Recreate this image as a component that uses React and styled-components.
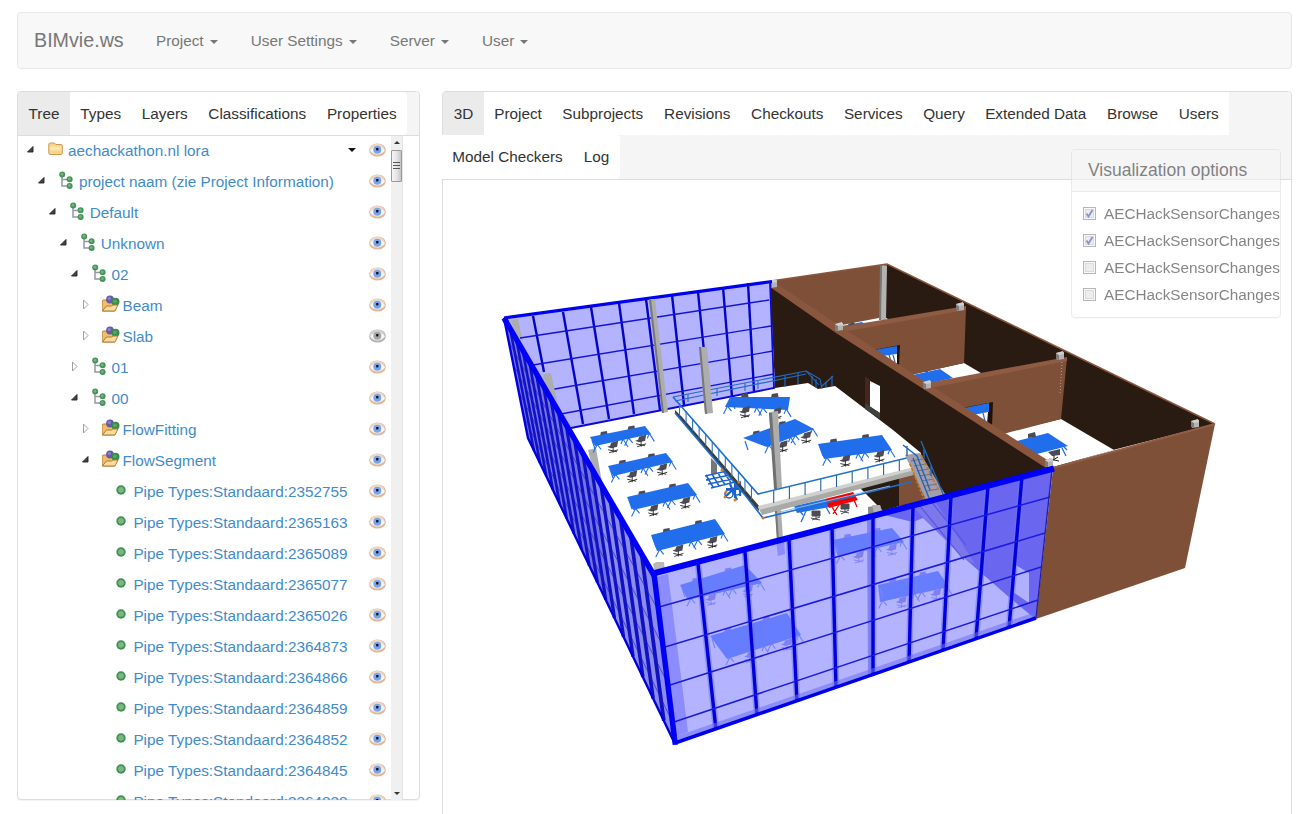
import React from "react";
import styled, { createGlobalStyle } from "styled-components";

const GlobalStyle = createGlobalStyle`
  *, *::before, *::after { box-sizing: border-box; }
  html, body { margin: 0; padding: 0; background: #fff; }
  body {
    height: 814px;
    overflow: hidden;
    font-family: "Liberation Sans", Arial, Helvetica, sans-serif;
    font-size: 15.3px;
    color: #333;
  }
`;

const Page = styled.div`
  height: 814px;
  overflow: hidden;
  padding: 12px 22px 0 17px;
`;

const Navbar = styled.nav`
  display: flex;
  align-items: center;
  height: 57px;
  padding-left: 16px;
  background: #f8f8f8;
  border: 1px solid #e7e7e7;
  border-radius: 4px;
  color: #777;
`;

const Brand = styled.a`
  font-size: 19.7px;
  margin-right: 32.3px;
  line-height: 22px;
  margin-top: -2px;
`;

const NavItem = styled.a`
  display: flex;
  align-items: center;
  margin-right: 33.2px;
  white-space: nowrap;
`;

const Caret = styled.span`
  width: 0;
  height: 0;
  margin-left: ${(p) => p.$gap ?? 6}px;
  margin-top: ${(p) => p.$drop ?? 2}px;
  border-left: 4px solid transparent;
  border-right: 4px solid transparent;
  border-top: 4px solid ${(p) => p.$color || "#777"};
`;

const Columns = styled.div`
  display: flex;
  align-items: flex-start;
  gap: 22px;
  margin-top: 22px;
`;

const Panel = styled.section`
  position: relative;
  flex: none;
  width: ${(p) => p.$w}px;
  height: ${(p) => p.$h}px;
  border: 1px solid #ddd;
  border-radius: 4px;
  background: #fff;
  box-shadow: 0 1px 1px rgba(0, 0, 0, 0.05);
`;

const TabBar = styled.div`
  display: flex;
  flex-wrap: wrap;
  background: #f5f5f5;
  border-bottom: 1px solid #ddd;
  border-radius: 3px 3px 0 0;
`;

const Tab = styled.a`
  display: flex;
  align-items: center;
  justify-content: center;
  height: ${(p) => p.$h || 43}px;
  width: ${(p) => p.$w}px;
  margin-left: ${(p) => (p.$wrapStart ? -1 : 0)}px;
  white-space: nowrap;
  background: ${(p) => (p.$active ? "#ebebeb" : "#fff")};
  border-radius: ${(p) => (p.$last ? "0 4px 4px 0" : p.$active ? "3px 0 0 0" : "0")};
`;

const TreeBody = styled.div`
  display: flex;
  height: 664px;
  width: 385px;
`;

const TreeList = styled.div`
  flex: 1;
  overflow: hidden;
`;

const Row = styled.div`
  display: flex;
  align-items: center;
  height: 31px;
  padding-left: ${(p) => 7 + p.$level * 10.9}px;
`;

const Toggle = styled.span`
  display: flex;
  width: 22px;
  height: 16px;
  margin-top: -3px;
`;

const IconBox = styled.span`
  display: flex;
  width: 18px;
  height: 20px;
  margin-right: 3px;
  margin-top: -5px;
`;

const Label = styled.a`
  flex: 1;
  color: #428bca;
  white-space: nowrap;
  margin-top: -2px;
`;

const EyeBox = styled.span`
  display: flex;
  width: 17px;
  height: 14px;
  margin: -4px 5px 0 13px;
`;

const Scrollbar = styled.div`
  display: flex;
  flex-direction: column;
  align-items: center;
  width: 12px;
  background: #f0f0f0;
  border-right: 1px solid #e4e4e4;
`;

const ScrollArrow = styled.span`
  width: 0;
  height: 0;
  margin: ${(p) => (p.$down ? "auto 0 5px" : "5px 0 6px")};
  border-left: 3px solid transparent;
  border-right: 3px solid transparent;
  ${(p) => (p.$down ? "border-top: 3px solid #333;" : "border-bottom: 3px solid #333;")}
`;

const Thumb = styled.span`
  display: flex;
  flex-direction: column;
  align-items: center;
  justify-content: center;
  gap: 1px;
  width: 11px;
  height: 32px;
  border: 1px solid #999;
  border-radius: 1px;
  background: linear-gradient(90deg, #f5f5f5, #e6e6e8 50%, #c6c6ca);
`;

const Grip = styled.i`
  width: 7px;
  height: 2px;
  border-top: 1px solid #555;
`;

const SceneSvg = styled.svg`
  display: block;
  width: 848px;
  height: 634px;
`;

const Options = styled.aside`
  position: absolute;
  left: 628px;
  top: 57px;
  width: 210px;
  height: 169px;
  overflow: hidden;
  opacity: 0.6;
  border: 1px solid #ddd;
  border-radius: 4px;
  background: #fff;
  box-shadow: 0 1px 1px rgba(0, 0, 0, 0.05);
`;

const OptionsTitle = styled.h3`
  margin: 0;
  height: 42px;
  padding-left: 16px;
  font-size: 17.5px;
  font-weight: 400;
  line-height: 40px;
  background: #f5f5f5;
  border-bottom: 1px solid #ddd;
`;

const OptionList = styled.div`
  display: flex;
  flex-direction: column;
  padding-top: 8px;
`;

const Option = styled.label`
  display: flex;
  align-items: center;
  gap: 8px;
  height: 27px;
  padding-left: 11px;
  white-space: nowrap;
`;

const CheckIcon = styled.svg`
  flex: none;
  width: 13px;
  height: 13px;
`;

const Check = ({ on }) => (
  <CheckIcon viewBox="0 0 13 13">
    <rect x=".5" y=".5" width="12" height="12" fill="#f6f6f6" stroke="#858585" />
    <rect x="2.5" y="2.5" width="8" height="8" fill="#e2e2e4" stroke="#bfc1c8" />
    {on && <path d="M3.5 6.5 L5.5 9.5 L9.5 3" fill="none" stroke="#3b52a0" strokeWidth="1.9" />}
  </CheckIcon>
);

const Eye = ({ gray }) => (
  <svg width="17" height="14" viewBox="0 0 17 14">
    <ellipse cx="8.5" cy="7" rx="8.4" ry="6.600" fill={gray ? "#b4b4b4" : "#e2b899"} />
    <ellipse cx="8.1" cy="6.200" rx="7.400" ry="5.500" fill={gray ? "#d2d2d2" : "#ecd8c8"} />
    <path d="M1.200 7.500Q8.500 -1.500 16 7.500Q8.500 15 1.200 7.500Z" fill="#f4f8fc" />
    <circle cx="8.300" cy="6.800" r="4" fill={gray ? "#a4a4a4" : "#7aa4ea"} />
    <rect x="7.200" y="5" width="2.200" height="2.400" fill="#0b0b16" />
  </svg>
);

const Arrow = ({ kind }) => (
  <svg width="16" height="16" viewBox="0 0 16 16">
    {kind === "open" && <path d="M2.5 10 L8 4.500 V10 Z" fill="#444" stroke="#222" strokeWidth=".9" />}
    {kind === "closed" && <path d="M3.500 3 L8 7.500 L3.500 12 Z" fill="#fff" stroke="#a0a0a0" />}
  </svg>
);

const NodeIcon = ({ kind }) => (
  <svg width="18" height="20" viewBox="0 0 18 20">
    {kind === "folder" && (
      <g transform="translate(.3 .5)">
        <path d="M1.500 13.500V5.500Q1.500 3.500 3 3.500H7L8.500 5H14Q15 5 15 6.500V13.500Q15 15 14 15H3Q1.500 15 1.500 13.500Z" fill="#f9d58c" stroke="#c9994f" />
        <path d="M2.500 7H14V11H2.500Z" fill="#fce8b4" opacity=".8" />
      </g>
    )}
    {kind === "tree" && (
      <g>
        <path d="M4 5V16H11M4 9.500H11" fill="none" stroke="#9298a5" strokeWidth="1.500" />
        <circle cx="4.200" cy="4.500" r="3" fill="#459358" />
        <circle cx="11.600" cy="9.300" r="3" fill="#459358" />
        <circle cx="11.600" cy="16" r="3" fill="#459358" />
        <circle cx="4" cy="4.200" r="1.400" fill="#74b47e" />
        <circle cx="11.300" cy="9" r="1.400" fill="#74b47e" />
        <circle cx="11.300" cy="15.700" r="1.400" fill="#74b47e" />
      </g>
    )}
    {kind === "group" && (
      <g transform="translate(-.5 .5)">
        <path d="M.5 16V6.500L2 5.500H6L7 7.500H15V9L13 16.500H1Z" fill="#f1bd6a" stroke="#b5813a" />
        <circle cx="8.500" cy="5" r="3.900" fill="#655aa6" />
        <circle cx="7.800" cy="4" r="1.700" fill="#8b82c2" />
        <circle cx="14" cy="7.300" r="4" fill="#3a8c4a" />
        <circle cx="13.500" cy="6.800" r="1.900" fill="#57a463" />
        <path d="M.800 16.500 L5 11.500H10L11.500 10.500H16.500L13.500 16.500Z" fill="#f9dc9e" stroke="#b07b30" />
      </g>
    )}
    {kind === "dot" && (
      <g>
        <circle cx="9" cy="10" r="4.700" fill="#3f9156" />
        <circle cx="9" cy="9.800" r="2.900" fill="#7db67e" />
      </g>
    )}
  </svg>
);

const P = ({ p, ...rest }) => <polygon points={p} {...rest} />;

const lerp = (a, b, t) => [a[0] + (b[0] - a[0]) * t, a[1] + (b[1] - a[1]) * t];

/* A desk is given by its four top corners: back left, back right, front right, front left. */
const Desk = ({ q, top = "#216eec", chair = "#4a4b55", leg = top }) => {
  const [a, b, c, d] = q;
  const foot = chair === "#4a4b55" ? "#222" : chair;
  return (
    <g>
      {[0.18, 0.68].map((t) => {
        const [x, y] = lerp(a, b, t);
        return <path key={t} d={`M${x} ${y + 2} l1 -5 l6 -1 l1 6z`} fill={chair} />;
      })}
      {[0.04, 0.5, 0.6, 0.97].map((t, i) => {
        const [x, y] = lerp(d, c, t);
        return (
          <path
            key={t}
            d={`M${x} ${y - 1} l${i % 2 ? 5 : -4} 8 M${x} ${y - 1} l${i % 2 ? -2 : 4} 5`}
            stroke={leg}
            strokeWidth="1.100"
            fill="none"
          />
        );
      })}
      <polygon points={q.map((v) => v.join(",")).join(" ")} fill={top} />
      <path d={`M${a[0] + 2} ${a[1] + 3} l3 9`} stroke={leg} strokeWidth="1.200" />
      {[0.27, 0.77].map((t) => {
        const [x, y] = lerp(d, c, t);
        return (
          <g key={t}>
            <path d={`M${x + 1} ${y} l7 -2 l-1 6 l-6 1.500 l-4 -1.500 l3 -1 z`} fill={chair} />
            <path
              d={`M${x + 3} ${y + 4} v6 M${x - 2} ${y + 7} l9 2 M${x + 8} ${y + 7} l-9 3`}
              stroke={foot}
              strokeWidth=".9"
            />
          </g>
        );
      })}
    </g>
  );
};

const BACK_POSTS = [
  [533, 316, 544, 372], [563, 312, 583, 424], [591, 307, 609, 419], [619, 303, 634, 414],
  [646, 299, 660, 410], [672, 295, 684, 405], [698, 292, 709, 401], [723, 287, 732, 397],
  [748, 283, 754, 391],
];
const BACK_RAILS = [
  [520, 338, 769, 300], [533, 365, 771, 326], [549, 390, 773, 351], [561, 414, 774, 374],
];
const FRONT_POSTS = [
  [698, 564, 716, 730], [745, 552, 757, 715], [789, 540, 797, 702], [832, 528, 836, 688],
  [873, 517, 873, 675], [913, 506, 909, 663], [951, 496, 943, 651], [988, 486, 976, 639],
  [1022, 476, 1009, 628],
];
const FRONT_RAILS = [
  [659, 607, 1050, 497], [665, 647, 1045, 533], [670, 685, 1041, 567], [674, 722, 1038, 600],
];
const BAYS = 18;
const SIDE_POSTS = Array.from({ length: BAYS - 1 }, (_, i) => {
  const t = (i + 1) / BAYS;
  const s = t / (1.4 * (1 - t) + t);
  return [...lerp([504, 318], [653, 574], s), ...lerp([528, 438], [675, 744], s), 2.4 + 1.5 * s];
});

const Lines = ({ list, ...rest }) => (
  <g {...rest}>
    {list.map((l, i) => (
      <line key={i} x1={l[0]} y1={l[1]} x2={l[2]} y2={l[3]} strokeWidth={l[4]} />
    ))}
  </g>
);

const CUBES = [[773, 284], [839, 327], [927, 385], [960, 307], [1060, 356], [1049, 463], [1195, 424]];

const rail = (x1, y1, x2, y2, n, h1, h2) =>
  Array.from({ length: n }, (_, i) => {
    const t = (i + 1) / (n + 1);
    const [x, y] = lerp([x1, y1], [x2, y2], t);
    return [x, y, x, y + h1 + (h2 - h1) * t];
  });

const GLASS = { top: "#667dff", chair: "#8080f5", leg: "#7585fa" };

const Scene = () => (
  <SceneSvg viewBox="443 180 848 634">
    {/* outer shell and rooms */}
    <P p="887,264 1215,424 1113,450 1053,468 845,335 882,300" fill="#2a1b12" />
    <P p="771,281 887,264 884,318 838,330" fill="#7e5038" />
    <P p="842,325 884,317 890,320 848,330" fill="#fff" />
    <P p="842,326 862,322 866,325 848,329" fill="#216eec" />
    <P p="848,324 854,322 855,325 849,326" fill="#4a4b55" />
    <P p="882,265 887,266 886,320 880,320" fill="#b2b2b2" />
    <P p="880,265 882,265 881,320 879,320" fill="#777" />
    <path d="M771 281 L887 264 L1215 424" fill="none" stroke="#8a573e" strokeWidth="1.600" />
    <P p="905,376 964,363 986,376 925,388" fill="#fff" />
    <P p="908,376 940,369 953,378 926,384" fill="#216eec" />
    <P p="920,369 927,368 928,372 920,372" fill="#4a4b55" />
    <path d="M938 383 l4 -1 M944 381 l5 -1" stroke="#6f7d95" strokeWidth="2" />
    <P p="838,328 966,308 964,363 906,376" fill="#7e5038" />
    <P p="840,327 966,306 966,310 842,332" fill="#8f5b42" />
    <P p="873,350 900,345 899,366" fill="#1c110b" />
    <P p="874,350 897,346 897,355 882,356" fill="#216eec" />
    <P p="882,356 897,354 897,364" fill="#fff" />
    <path d="M884 356 l4 4 M889 355 l2 6 M893 355 l2 7" stroke="#4a5a80" strokeWidth="1.200" />

    <P p="1003,433 1061,419 1114,450 1053,467" fill="#fff" />
    <P p="927,385 1067,358 1061,419 1003,434" fill="#7e5038" />
    <P p="1013,442 1048,433 1068,446 1033,455" fill="#216eec" />
    <path d="M1037 455 l4 6 M1062 448 l4 8 M1064 447 l3 3" stroke="#216eec" strokeWidth="1.300" />
    <P p="1048,452 1060,449 1060,455 1052,456" fill="#4a4b55" />
    <path d="M1054 455 v4 M1049 459 l10 2 M1058 457 l-8 5" stroke="#222" />
    <P p="1028,434 1035,432 1036,437 1028,438" fill="#4a4b55" />
    <P p="927,383 1067,357 1067,361 930,388" fill="#8f5b42" />
    <path d="M1062 362 L1060 395" stroke="#b0a09a" strokeDasharray="1 2" />
    <P p="962,408 993,402 992,426 985,425" fill="#1c110b" />
    <P p="964,408 989,403 989,412 971,415" fill="#216eec" />
    <P p="972,415 988,412 987,424" fill="#fff" />
    <path d="M976 415 l6 5 M983 413 l2 8" stroke="#216eec" strokeWidth="1.200" />
    <P p="1053,468 1215,424 1185,568 1036,619" fill="#7e5038" />
    <path d="M1053 468 L1215 424" stroke="#915d44" strokeWidth="2" />

    {/* corridor wall */}
    <P p="770,284 775,388 808,383 818,389 835,386 893,430 921,453 917,476 900,506 1053,470 840,331" fill="#2a1b12" />
    <P p="774,282 840,326 927,383 1052,463 1046,468 925,390 836,333 770,287" fill="#8a573e" />
    <P p="865,376 870,380 870,408 865,404" fill="#46271f" />
    <P p="870,381 880,386 880,413 870,407" fill="#fff" />
    <P p="865,403 880,413 880,419 865,409" fill="#3f413e" />
    {CUBES.map(([x, y]) => (
      <g key={x}>
        <P p={`${x - 4},${y - 3} ${x + 4},${y - 4} ${x + 4},${y + 3} ${x - 3},${y + 4}`} fill="#b4b4b4" />
        <P p={`${x - 4},${y - 3} ${x - 1},${y - 1} ${x - 1},${y + 4} ${x - 4},${y + 3}`} fill="#7c7c7c" />
        <P p={`${x - 4},${y - 3} ${x + 3},${y - 5} ${x + 4},${y - 2} ${x - 1},${y - 1}`} fill="#cfcfcf" />
      </g>
    ))}

    {/* back glass wall */}
    <P p="504,318 770,281 775,388 571,428" fill="#b3b3ff" />
    <P p="511,320 518,319 523,342 515,334" fill="#adadad" />
    <Lines list={BACK_POSTS} stroke="#0404c8" strokeWidth="2.400" />
    <Lines list={BACK_RAILS} stroke="#1212d8" strokeWidth="1.300" />
    <path d="M504 318 L772 281.500" stroke="#0000f0" strokeWidth="3.200" />
    <path d="M770 282 L774 388 L571 428" fill="none" stroke="#0a0ad2" strokeWidth="1.800" />
    <P p="649,299 655,299 668,412 662,413" fill="#adadad" />
    <P p="649,299 651,299 664,413 662,413" fill="#777" />
    <P p="543,374 551,373 557,401 549,396" fill="#adadad" />
    <P p="588,450 596,448 603,488 594,475" fill="#adadad" />

    {/* upper platform railing, far side */}
    <g stroke="#236bc4" strokeWidth="1.100" fill="none">
      <path d="M673 397 L806 371 L819 385 M675 401 L806 374 M806 371 l14 8 l2 10 M833 376 l-12 11" />
      <path d="M688 394 v8 M717 388 v8 M745 383 v8 M758 381 v8 M785 375 v12 M798 373 v11 M816 379 v9 M812 376 v9 M832 376 v10 M826 382 v5" />
    </g>
    <P p="699,347 707,347 713,413 705,414" fill="#adadad" />
    <P p="699,347 701,347 707,414 705,414" fill="#777" />

    {/* desks */}
    <Desk q={[[590, 437], [645, 426], [651, 434], [595, 446]]} />
    <Desk q={[[608, 466], [666, 453], [673, 462], [613, 476]]} />
    <Desk q={[[627, 497], [688, 483], [697, 495], [633, 510]]} />
    <Desk q={[[651, 535], [715, 519], [725, 534], [657, 551]]} />
    <Desk q={[[730, 397], [790, 397], [788, 410], [725, 407]]} />
    <Desk q={[[743, 438], [795, 419], [814, 429], [767, 447]]} />
    <Desk q={[[818, 444], [882, 435], [892, 450], [824, 459]]} />

    {/* space under the platform */}
    <P p="860,488 899,478 899,506 883,511" fill="#2a1b12" />
    <P p="899,478 916,474 932,499 899,506" fill="#7e5038" />
    <P p="794,506 825,499 830,507 797,513" fill="#216eec" />
    <path d="M806 511 l-5 11 M799 510 l4 5 M826 507 l4 7" stroke="#216eec" strokeWidth="1.300" />
    <path d="M812 511 h8 v5 h-8z M816 515 v5 M811 518 l9 2 M820 517 l-8 3" fill="#4a4b55" stroke="#4a4b55" />
    <P p="825,499 853,492 858,500 829,508" fill="#f40000" />
    <path d="M832 507 l5 8 M839 505 l-6 9 M854 500 l3 7 M850 502 l4 -4" stroke="#f40000" strokeWidth="1.300" />
    <path d="M841 504 h8 v5 h-8z M845 507 v5 M840 511 l9 2 M849 510 l-8 4" fill="#4a4b55" stroke="#4a4b55" />
    <P p="868,507 880,505 884,516 868,520" fill="#8d8d8d" />
    <P p="872,505 880,505 882,512 874,513" fill="#b5b5b5" />

    {/* platform edge and bicycles */}
    <P p="711,458 717,464 717,474 711,474" fill="#777" />
    <g stroke="#1c62cc" fill="none" strokeWidth="1.500">
      <path d="M705 476 L727 471 M706 480 L730 475 M708 484 L733 479 M711 488 L735 482 M706 475 l7 12 M712 474 l7 12 M718 473 l7 12 M724 472 l7 11" />
      <circle cx="729" cy="494" r="4" />
      <circle cx="737" cy="491" r="4" />
      <path d="M725 497 L740 483 L740 496 M730 484 L737 500 M735 482 v16 M726 489 h14" strokeWidth="2.200" />
    </g>
    <P p="675,410 682,417 760,507 759,511 754,506 675,413" fill="#3d3e3c" />
    <P p="758,507 914,468 917,474 762,515" fill="#a9a9a6" />
    <P p="758,506 914,467 915,470 759,510" fill="#d0d0ce" />
    <P p="769,412 778,411 782,488 775,489" fill="#adadad" />
    <P p="769,413 772,413 777,489 774,489" fill="#707070" />
    <P p="775,511 781,509 783,540 777,541" fill="#adadad" />
    <P p="775,511 777,511 779,541 777,541" fill="#777" />
    <Lines list={rail(673, 396, 758, 494, 12, 12, 13)} stroke="#2c72c8" strokeWidth="1.100" />
    <Lines list={rail(758, 494, 915, 456, 9, 13, 11)} stroke="#2c5f9c" strokeWidth="1.100" />
    <path d="M673 397 L758 494 L915 456" fill="none" stroke="#1f70cc" strokeWidth="1.600" />
    <path d="M675 413 L745 495 L763 518 L911 482" fill="none" stroke="#1f70cc" strokeWidth="1.600" />
    <path d="M780 512 L890 486" stroke="#8db9ee" strokeWidth="1" />
    {[[763, 518], [739, 482], [725, 497], [735, 500], [722, 470], [726, 492]].map(([x, y]) => (
      <circle key={x + y} cx={x} cy={y} r="1.500" fill="#dc7a1c" />
    ))}

    {/* stairs */}
    <P p="905,455 920,453 945,494 926,500" fill="#a69dab" />
    <path d="M911 461 l12 -2 M914 466 l12 -2 M917 471 l12 -2 M920 476 l12 -2 M922 481 l12 -2 M925 486 l12 -2 M927 491 l12 -2" stroke="#756d7c" />
    <path d="M910 464 L924 499 M921 455 L939 491" stroke="#c17a24" strokeWidth="1.800" strokeDasharray="3 1.500" />
    <path d="M903 445 L917 456 L930 490 M921 441 L943 494 M913 458 L929 498 M907 446 v10 M924 449 v10 M931 466 v10" stroke="#1f66b6" fill="none" strokeWidth="1.400" />

    {/* side glass wall */}
    <P p="504,318 653,574 675,744 528,438" fill="#7474e2" />
    <P p="590,466 653,574 675,744 612,613" fill="#9292ee" opacity=".8" />
    <Lines list={SIDE_POSTS} stroke="#1010c4" />
    <path d="M509 342 L657 608 M514 366 L662 644 M519 392 L667 682 M524 417 L671 719" stroke="#2020cc" strokeWidth="1" opacity=".6" />
    <path d="M504 318 L528 438 L675 744" stroke="#0000df" strokeWidth="2.400" fill="none" />
    <path d="M504 318 L655 577" stroke="#0000f8" strokeWidth="5.500" />
    <P p="653,564 656,562 664,562 665,571 655,573" fill="#b9b9b9" />

    {/* front glass wall */}
    <P p="653,574 1053,467 1036,618 675,744" fill="#b3b3ff" />
    <P p="884,515 913,507 951,497 1053,469 1036,618 1033,617 1010,598 963,557 923,518 913,522" fill="#6a66ef" />
    <P p="913,507 935,501 975,564 963,558" fill="#8480ea" opacity=".7" />
    <path d="M930 500 L966 545 M920 506 L964 560" stroke="#5451e2" strokeWidth="1.100" />
    <P p="1014,564 1029,573 1029,603 1013,592" fill="#b0b0ff" />
    <P p="656,577 668,574 688,732 677,736" fill="#8c8cfe" />
    <P p="867,518 874,516 875,676 868,677" fill="#8383f4" />
    <P p="776,541 784,539 785,554 778,556" fill="#8c8cfe" />
    <Desk q={[[680, 585], [745, 565], [762, 583], [688, 600]]} {...GLASS} />
    <Desk q={[[710, 636], [787, 613], [801, 635], [727, 659]]} {...GLASS} />
    <Desk q={[[833, 540], [892, 528], [904, 542], [838, 557]]} {...GLASS} />
    <Desk q={[[878, 585], [938, 571], [949, 587], [880, 602]]} {...GLASS} />
    <Lines list={FRONT_POSTS} stroke="#7070f4" strokeWidth="6.500" opacity=".5" />
    <Lines list={FRONT_POSTS} stroke="#0000da" strokeWidth="3.400" />
    <Lines list={FRONT_RAILS} stroke="#1a1ae0" strokeWidth="1.500" />
    <path d="M678 738 L1036 614" stroke="#7070f4" strokeWidth="4" opacity=".55" />
    <path d="M675 743 L1036 618" stroke="#0000e8" strokeWidth="3.500" />
    <path d="M1052 469 L1036 618" stroke="#25209c" strokeWidth="1.300" />
    <path d="M654 574 L675 742" stroke="#0000f4" strokeWidth="5.500" strokeLinecap="square" />
    <path d="M653 573.500 L1054 468.500" stroke="#0000f8" strokeWidth="6" />
  </SceneSvg>
);

const NAV = ["Project", "User Settings", "Server", "User"];
const LEFT_TABS = [["Tree", 52], ["Types", 61.5], ["Layers", 66.5], ["Classifications", 118.5], ["Properties", 90.5]];
const MAIN_TABS = [
  ["3D", 41], ["Project", 68], ["Subprojects", 101.5], ["Revisions", 87.5], ["Checkouts", 92.5],
  ["Services", 79.5], ["Query", 62], ["Extended Data", 121.5], ["Browse", 72], ["Users", 60.5],
];
const ROWS = [
  [0, "open", "folder", "aechackathon.nl lora"],
  [1, "open", "tree", "project naam (zie Project Information)"],
  [2, "open", "tree", "Default"],
  [3, "open", "tree", "Unknown"],
  [4, "open", "tree", "02"],
  [5, "closed", "group", "Beam"],
  [5, "closed", "group", "Slab", true],
  [4, "closed", "tree", "01"],
  [4, "open", "tree", "00"],
  [5, "closed", "group", "FlowFitting"],
  [5, "open", "group", "FlowSegment"],
  ...["2352755", "2365163", "2365089", "2365077", "2365026", "2364873", "2364866", "2364859", "2364852", "2364845", "2364838"].map(
    (n) => [6, "", "dot", "Pipe Types:Standaard:" + n]
  ),
];

export default function App() {
  return (
    <Page>
      <GlobalStyle />
      <Navbar>
        <Brand>BIMvie.ws</Brand>
        {NAV.map((name) => (
          <NavItem key={name}>
            {name}
            <Caret />
          </NavItem>
        ))}
      </Navbar>
      <Columns>
        <Panel $w={403} $h={709}>
          <TabBar>
            {LEFT_TABS.map(([name, w], i) => (
              <Tab key={name} $w={w} $active={i === 0} $last={i === 4}>{name}</Tab>
            ))}
          </TabBar>
          <TreeBody>
            <TreeList>
              {ROWS.map(([level, toggle, icon, text, gray]) => (
                <Row key={text} $level={level}>
                  <Toggle><Arrow kind={toggle} /></Toggle>
                  <IconBox><NodeIcon kind={icon} /></IconBox>
                  <Label>{text}</Label>
                  {level === 0 && <Caret $color="#111" $drop={-3} />}
                  <EyeBox><Eye gray={gray} /></EyeBox>
                </Row>
              ))}
            </TreeList>
            <Scrollbar>
              <ScrollArrow />
              <Thumb><Grip /><Grip /><Grip /></Thumb>
              <ScrollArrow $down />
            </Scrollbar>
          </TreeBody>
        </Panel>
        <Panel $w={850} $h={740}>
          <TabBar>
            {MAIN_TABS.map(([name, w], i) => (
              <Tab key={name} $w={w} $active={i === 0}>{name}</Tab>
            ))}
            <Tab $w={131} $h={44} $wrapStart>Model Checkers</Tab>
            <Tab $w={47} $h={44} $last>Log</Tab>
          </TabBar>
          <Scene />
          <Options>
            <OptionsTitle>Visualization options</OptionsTitle>
            <OptionList>
              {[true, true, false, false].map((on, i) => (
                <Option key={i}>
                  <Check on={on} />
                  AECHackSensorChanges
                </Option>
              ))}
            </OptionList>
          </Options>
        </Panel>
      </Columns>
    </Page>
  );
}
